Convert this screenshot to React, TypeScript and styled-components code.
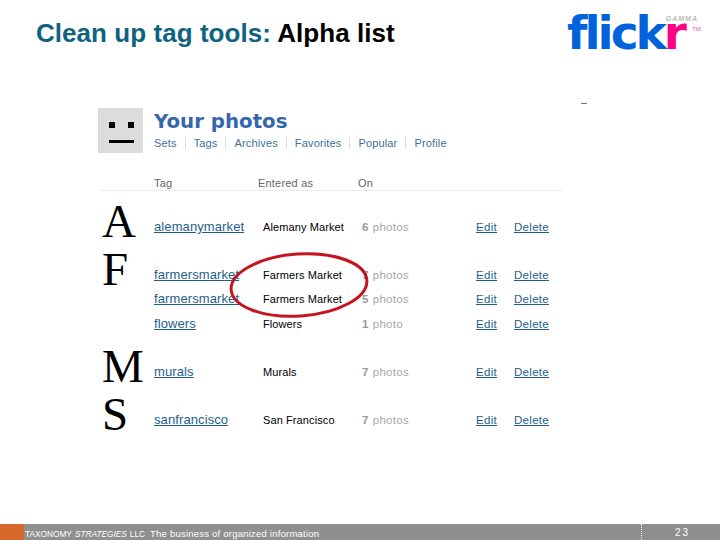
import React from "react";
import styled, { createGlobalStyle } from "styled-components";

const Global = createGlobalStyle`
  html, body { margin: 0; padding: 0; background: #fff; }
  body { font-family: "Liberation Sans", Arial, sans-serif; }
`;

const Slide = styled.div`
  position: relative;
  width: 720px;
  height: 540px;
  overflow: hidden;
  display: flex;
  flex-direction: column;
  background: #fff;
`;

const Header = styled.header`
  height: 60px;
  display: flex;
  justify-content: space-between;
  align-items: flex-start;
  padding: 0 28px 0 36px;
`;

const Title = styled.h1`
  margin: 18px 0 0;
  font-size: 26px;
  line-height: 30px;
  letter-spacing: 0.05px;
  font-weight: 700;
  color: #0f6380;
`;

const TitleRest = styled.span`
  color: #000;
`;

const Logo = styled.div`
  position: relative;
  width: 125px;
  height: 44px;
  margin-top: 9px;
  font-family: "DejaVu Sans", sans-serif;
  font-weight: 700;
  font-size: 47px;
  line-height: 48px;
  letter-spacing: -3px;
  color: #0063dc;
  white-space: nowrap;
`;

const LogoPink = styled.span`
  color: #ff0084;
`;

const Gamma = styled.span`
  position: absolute;
  right: -6px;
  top: 6px;
  font-family: "Liberation Sans", sans-serif;
  font-size: 7px;
  line-height: 8px;
  font-weight: 700;
  font-style: italic;
  letter-spacing: 1px;
  color: #b9b9b9;
`;

const Tm = styled.span`
  position: absolute;
  right: -9px;
  top: 17px;
  font-family: "Liberation Sans", sans-serif;
  font-size: 6px;
  font-weight: 400;
  line-height: 7px;
  letter-spacing: 0;
  color: #e0609f;
`;

const Main = styled.main`
  flex: 1;
  padding: 48px 0 0 98px;
`;

const Profile = styled.div`
  display: flex;
  gap: 11px;
  height: 45px;
`;

const Avatar = styled.div`
  position: relative;
  width: 45px;
  height: 45px;
  background: #dcdcdc;
`;

const Eye = styled.span<{ $side: "left" | "right" }>`
  position: absolute;
  top: 14px;
  ${(p) => (p.$side === "left" ? "left: 11px;" : "right: 9px;")}
  width: 6px;
  height: 6px;
  background: #000;
`;

const Mouth = styled.span`
  position: absolute;
  left: 11px;
  top: 32px;
  width: 25px;
  height: 2.5px;
  background: #000;
`;

const ProfileText = styled.div`
  display: flex;
  flex-direction: column;
`;

const PageName = styled.div`
  font-family: "DejaVu Sans", sans-serif;
  font-size: 19.8px;
  line-height: 26px;
  margin-top: 1px;
  font-weight: 700;
  color: #3567ac;
`;

const Nav = styled.nav`
  display: flex;
  margin-top: 2px;
`;

const NavItem = styled.span<{ $first?: boolean }>`
  font-size: 11px;
  line-height: 12px;
  letter-spacing: 0.15px;
  color: #3f6f9f;
  padding: 0 8px;
  ${(p) => (p.$first ? "padding-left: 0;" : "border-left: 1px solid #dcdcdc;")}
`;

const Table = styled.div`
  width: 464px;
  margin-top: 24px;
`;

const HeadRow = styled.div`
  display: grid;
  grid-template-columns: 56px 104px 100px auto;
  height: 13px;
  border-bottom: 1px solid #ececec;
  font-size: 11px;
  line-height: 12px;
  letter-spacing: 0.2px;
  color: #666;
`;

const Row = styled.div<{ $tall?: boolean }>`
  display: grid;
  grid-template-columns: 56px 109px 99px 114px 38px auto;
  height: ${(p) => (p.$tall ? "48px" : "24.4px")};
  align-items: end;
  line-height: 24px;
`;

const Letter = styled.div`
  font-family: "Liberation Serif", serif;
  font-size: 47px;
  line-height: 36px;
  padding-left: 4px;
  color: #000;
`;

const TagLink = styled.a`
  font-size: 13px;
  letter-spacing: 0.1px;
  color: #1d5f8c;
  text-decoration: underline;
`;

const Name = styled.div`
  font-size: 11px;
  letter-spacing: 0.1px;
  color: #000;
`;

const Count = styled.div`
  font-size: 11.5px;
  letter-spacing: 0.3px;
  color: #a8a8a8;
`;

const CountNumber = styled.b`
  font-weight: 700;
  margin-right: 4px;
  color: #999;
`;

const ActionLink = styled.a`
  font-size: 11.5px;
  letter-spacing: 0.3px;
  color: #1d5f8c;
  text-decoration: underline;
`;

const Mark = styled.span`
  position: absolute;
  left: 581px;
  top: 103px;
  width: 6px;
  height: 1px;
  background: #777;
`;

const Circle = styled.svg`
  position: absolute;
  left: 226px;
  top: 248px;
`;

const Footer = styled.footer`
  height: 16px;
  display: flex;
  align-items: center;
  background: #8f8f8f;
  color: #fff;
`;

const Swatch = styled.div`
  width: 24px;
  height: 100%;
  background: #d9682c;
`;

const FooterBrand = styled.span`
  font-size: 8.3px;
  line-height: 16px;
  margin-left: 1px;
  margin-top: 3px;
  white-space: nowrap;
`;

const BrandItalic = styled.i`
  margin: 0 3px;
`;

const Motto = styled.span`
  font-size: 9.5px;
  line-height: 16px;
  letter-spacing: 0.22px;
  margin-left: 5px;
  margin-top: 3px;
  white-space: nowrap;
`;

const Divider = styled.div`
  margin-left: auto;
  height: 100%;
  border-left: 1px dotted #fff;
`;

const PageNumber = styled.span`
  width: 78px;
  padding-left: 33px;
  box-sizing: border-box;
  font-size: 10px;
  letter-spacing: 2px;
`;

type Item = { letter?: string; tag: string; name: string; n: number };

const rows: Item[] = [
  { letter: "A", tag: "alemanymarket", name: "Alemany Market", n: 6 },
  { letter: "F", tag: "farmersmarket", name: "Farmers Market", n: 7 },
  { tag: "farmersmarket", name: "Farmers Market", n: 5 },
  { tag: "flowers", name: "Flowers", n: 1 },
  { letter: "M", tag: "murals", name: "Murals", n: 7 },
  { letter: "S", tag: "sanfrancisco", name: "San Francisco", n: 7 },
];

const nav = ["Sets", "Tags", "Archives", "Favorites", "Popular", "Profile"];

export default function App() {
  return (
    <Slide>
      <Global />
      <Header>
        <Title>
          Clean up tag tools: <TitleRest>Alpha list</TitleRest>
        </Title>
        <Logo>
          flick<LogoPink>r</LogoPink>
          <Gamma>GAMMA</Gamma>
          <Tm>TM</Tm>
        </Logo>
      </Header>
      <Main>
        <Profile>
          <Avatar>
            <Eye $side="left" />
            <Eye $side="right" />
            <Mouth />
          </Avatar>
          <ProfileText>
            <PageName>Your photos</PageName>
            <Nav>
              {nav.map((n, i) => (
                <NavItem key={n} $first={i === 0}>
                  {n}
                </NavItem>
              ))}
            </Nav>
          </ProfileText>
        </Profile>
        <Table>
          <HeadRow>
            <span />
            <span>Tag</span>
            <span>Entered as</span>
            <span>On</span>
          </HeadRow>
          {rows.map((r, i) => (
            <Row key={i} $tall={!!r.letter}>
              <Letter>{r.letter}</Letter>
              <TagLink>{r.tag}</TagLink>
              <Name>{r.name}</Name>
              <Count>
                <CountNumber>{r.n}</CountNumber>
                {r.n === 1 ? "photo" : "photos"}
              </Count>
              <ActionLink>Edit</ActionLink>
              <ActionLink>Delete</ActionLink>
            </Row>
          ))}
        </Table>
      </Main>
      <Footer>
        <Swatch />
        <FooterBrand>
          TAXONOMY<BrandItalic>STRATEGIES</BrandItalic>LLC
        </FooterBrand>
        <Motto>The business of organized information</Motto>
        <Divider />
        <PageNumber>23</PageNumber>
      </Footer>
      <Mark />
      <Circle width="146" height="74" viewBox="0 0 146 74">
        <ellipse
          cx="73"
          cy="37"
          rx="68"
          ry="31"
          transform="rotate(-4 73 37)"
          fill="none"
          stroke="#c5141f"
          strokeWidth="3"
        />
      </Circle>
    </Slide>
  );
}
